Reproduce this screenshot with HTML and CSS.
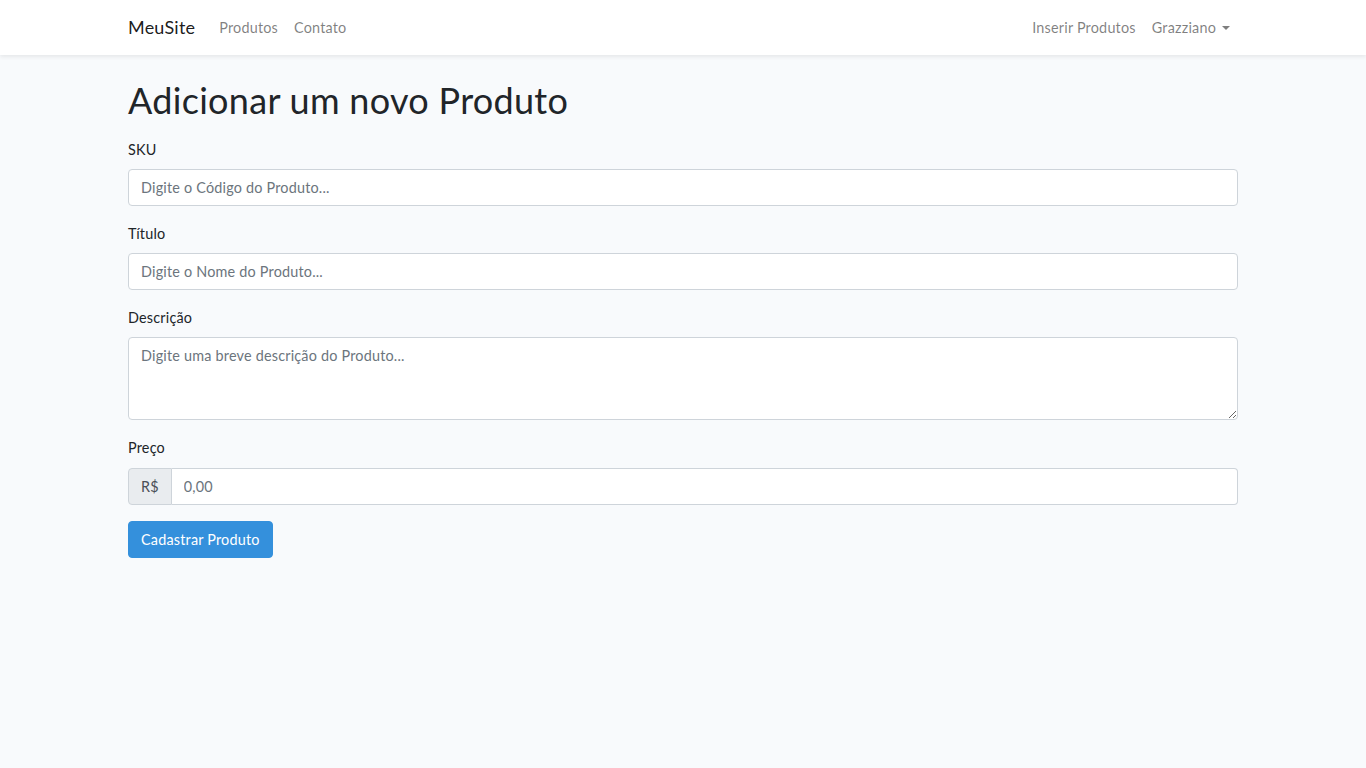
FILE: index.html
```html
<!DOCTYPE html>
<html lang="pt-BR">
<head>
<meta charset="utf-8">
<title>MeuSite</title>
<link rel="stylesheet" href="styles.css">
</head>
<body>
<nav class="navbar">
  <div class="container nav-inner">
    <div class="nav-left">
      <a class="brand" href="#">MeuSite</a>
      <a class="nav-link" href="#">Produtos</a>
      <a class="nav-link" href="#">Contato</a>
    </div>
    <div class="nav-right">
      <a class="nav-link" href="#">Inserir Produtos</a>
      <a class="nav-link dropdown" href="#">Grazziano<span class="caret"></span></a>
    </div>
  </div>
</nav>
<main class="main">
  <div class="container">
    <h1 class="title">Adicionar um novo Produto</h1>
    <form class="form">
      <div class="form-group">
        <label class="label" for="sku">SKU</label>
        <input class="control" id="sku" type="text" placeholder="Digite o Código do Produto...">
      </div>
      <div class="form-group">
        <label class="label" for="titulo">Título</label>
        <input class="control" id="titulo" type="text" placeholder="Digite o Nome do Produto...">
      </div>
      <div class="form-group">
        <label class="label" for="descricao">Descrição</label>
        <textarea class="control textarea" id="descricao" rows="3" placeholder="Digite uma breve descrição do Produto..."></textarea>
      </div>
      <div class="form-group">
        <label class="label" for="preco">Preço</label>
        <div class="input-group">
          <span class="addon">R$</span>
          <input class="control grouped" id="preco" type="text" placeholder="0,00">
        </div>
      </div>
      <button class="btn" type="button">Cadastrar Produto</button>
    </form>
  </div>
</main>
</body>
</html>
```

FILE: styles.css
```css
* { box-sizing: border-box; }
html, body { margin: 0; padding: 0; }
body {
  background: #f8fafc;
  font-family: Lato, "Noto Sans", sans-serif;
  font-size: 14.4px;
  line-height: 1.6;
  letter-spacing: 0.2px;
  color: #212529;
}
a { text-decoration: none; }
.container {
  width: 1140px;
  margin: 0 auto;
  padding: 0 15px;
}
.navbar {
  background: #fff;
  box-shadow: 0 2px 4px rgba(0,0,0,0.075);
  padding: 8px 0;
}
.nav-inner {
  display: flex;
  justify-content: space-between;
  align-items: center;
  height: 39px;
}
.nav-left, .nav-right { display: flex; align-items: center; }
.brand {
  font-size: 18px;
  color: rgba(0,0,0,0.9);
  margin-right: 16px;
}
.nav-link {
  color: rgba(0,0,0,0.5);
  padding: 8px 8px;
}
.caret {
  display: inline-block;
  margin-left: 6px;
  vertical-align: 3px;
  border-top: 4.5px solid rgba(0,0,0,0.5);
  border-left: 4.5px solid transparent;
  border-right: 4.5px solid transparent;
}
.main { padding-top: 24px; }
.title {
  font-size: 36px;
  font-weight: 400;
  line-height: 1.2;
  letter-spacing: 0.3px;
  margin: 0 0 16px;
}
.form-group { margin-bottom: 16px; }
.label {
  display: inline-block;
  margin-bottom: 8px;
}
.control {
  display: block;
  width: 100%;
  height: 37px;
  padding: 6px 12px;
  font-family: inherit;
  font-size: 14.4px;
  line-height: 1.6;
  letter-spacing: 0.2px;
  color: #495057;
  background: #fff;
  border: 1px solid #ced4da;
  border-radius: 4px;
}
.control::placeholder { color: #6c757d; opacity: 1; }
.textarea { height: 83px; resize: vertical; }
.input-group { display: flex; margin-top: 0.5px; }
.addon {
  display: flex;
  align-items: center;
  padding: 6px 12px;
  color: #495057;
  background: #e9ecef;
  border: 1px solid #ced4da;
  border-radius: 4px 0 0 4px;
  height: 37px;
}
.grouped {
  flex: 1;
  border-left: 0;
  border-radius: 0 4px 4px 0;
}
.btn {
  font-family: inherit;
  font-size: 14.4px;
  line-height: 1.6;
  letter-spacing: 0.2px;
  color: #fff;
  background: #3490dc;
  border: 1px solid #3490dc;
  border-radius: 4px;
  padding: 6px 12px;
  height: 37px;
}
```
